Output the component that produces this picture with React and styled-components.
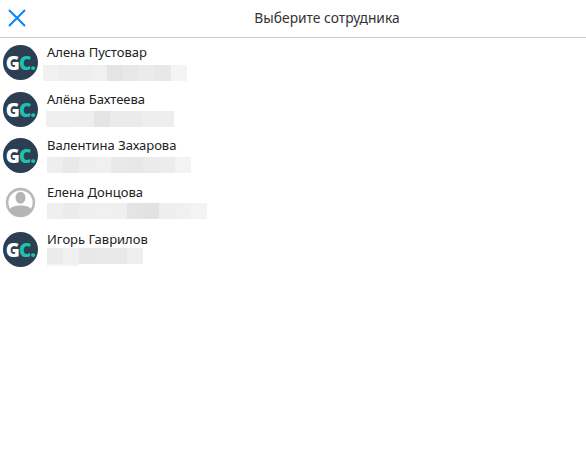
import React from 'react';
import styled, { createGlobalStyle } from 'styled-components';

const GlobalStyle = createGlobalStyle`
  html, body {
    margin: 0;
    padding: 0;
    background: #fff;
  }
  body {
    font-family: "Noto Sans", "Open Sans", sans-serif;
    color: #1f1f1f;
  }
`;

const Page = styled.div`
  width: 586px;
  height: 464px;
  overflow: hidden;
  background: #fff;
`;

const Header = styled.header`
  box-sizing: border-box;
  display: grid;
  grid-template-columns: 68px 1fr;
  align-items: center;
  height: 38px;
  padding-bottom: 2px;
  border-bottom: 1px solid #c9c9c9;
`;

const CloseButton = styled.button`
  display: flex;
  width: 34px;
  height: 34px;
  padding: 8px;
  border: 0;
  background: none;
  color: #0a84ff;
`;

const Title = styled.h1`
  margin: 0;
  font-size: 13.8px;
  font-weight: 400;
  line-height: 18px;
  text-align: center;
  color: #333;
`;

const List = styled.ul`
  display: flex;
  flex-direction: column;
  margin: 0;
  padding: 5px 0 0;
  list-style: none;
`;

const Row = styled.li`
  display: flex;
  gap: 9px;
  height: ${({ $height }) => $height}px;
  padding-left: 3px;
`;

const Avatar = styled.div`
  box-sizing: border-box;
  flex: none;
  display: flex;
  align-items: center;
  justify-content: center;
  width: 35px;
  height: 35px;
  margin-top: 2px;
  padding-top: 1px;
  border-radius: 50%;
  background: #2b3e52;
  font-family: "Open Sans", sans-serif;
  font-size: 19px;
  font-weight: 800;
  letter-spacing: -0.8px;
  color: #fff;
`;

const Accent = styled.span`
  color: #1cc4b0;
`;

const PlaceholderIcon = styled.svg`
  flex: none;
  width: 35px;
  height: 35px;
  margin-top: 2px;
`;

const Info = styled.div`
  display: flex;
  flex-direction: column;
  min-width: 0;
`;

const Name = styled.div`
  font-size: 13px;
  line-height: 18px;
  color: #222;
`;

const Blurred = styled.div`
  display: flex;
  height: 16px;
  margin-top: ${({ $top }) => $top}px;
  margin-left: ${({ $shift }) => $shift}px;
`;

const Tile = styled.span`
  width: 16px;
  height: 16px;
  background: ${({ $shade }) => $shade};
`;

const BlurredStrip = styled.div`
  width: 32px;
  height: 2px;
  background: #f3f3f3;
`;

const GcAvatar = () => (
  <Avatar>
    G<Accent>C.</Accent>
  </Avatar>
);

const PlaceholderAvatar = () => (
  <PlaceholderIcon viewBox="0 0 35 35">
    <circle cx="17.5" cy="17.5" r="13.4" fill="#fff" stroke="#b9b9b9" strokeWidth="2.6" />
    <ellipse cx="17.5" cy="12.8" rx="5" ry="6" fill="#b5b5b5" />
    <path d="M6.4 25 C8 21.6 12.6 20.6 17.5 20.6 C22.4 20.6 27 21.6 28.6 25 C26 29 22 31 17.5 31 C13 31 9 29 6.4 25 Z" fill="#b5b5b5" />
  </PlaceholderIcon>
);

const people = [
  {
    name: 'Алена Пустовар',
    height: 47,
    shift: -4,
    top: 4,
    tiles: ['#f1f1f1', '#eeeeee', '#eeeeee', '#f0f0f0', '#e4e4e4', '#e8e8e8', '#ebebeb', '#e8e8e8', '#f4f4f4'],
  },
  {
    name: 'Алёна Бахтеева',
    height: 46,
    shift: -1,
    top: 3,
    tiles: ['#efefef', '#efefef', '#eeeeee', '#e4e4e4', '#ebebeb', '#ebebeb', '#eeeeee', '#eeeeee'],
  },
  {
    name: 'Валентина Захарова',
    height: 47,
    shift: 0,
    top: 3,
    tiles: ['#eeeeee', '#e9e9e9', '#eeeeee', '#f0f0f0', '#e9e9e9', '#e7e7e7', '#ebebeb', '#ececec', '#f3f3f3'],
  },
  {
    name: 'Елена Донцова',
    height: 47,
    shift: 0,
    top: 2,
    placeholder: true,
    tiles: ['#efefef', '#ebebeb', '#efefef', '#f0f0f0', '#efefef', '#e4e4e4', '#e2e2e2', '#eeeeee', '#f0f0f0', '#f3f3f3'],
  },
  {
    name: 'Игорь Гаврилов',
    height: 47,
    shift: 0,
    top: 0,
    strip: true,
    tiles: ['#ebebeb', '#f0f0f0', '#e8e8e8', '#e9e9e9', '#e9e9e9', '#efefef'],
  },
];

export default function App() {
  return (
    <Page>
      <GlobalStyle />
      <Header>
        <CloseButton aria-label="Закрыть">
          <svg width="18" height="18" viewBox="0 0 18 18" fill="none" stroke="currentColor" strokeWidth="2.1">
            <path d="M1 1 L17 17 M17 1 L1 17" />
          </svg>
        </CloseButton>
        <Title>Выберите сотрудника</Title>
      </Header>
      <List>
        {people.map((person) => (
          <Row key={person.name} $height={person.height}>
            {person.placeholder ? <PlaceholderAvatar /> : <GcAvatar />}
            <Info>
              <Name>{person.name}</Name>
              <Blurred $shift={person.shift} $top={person.top}>
                {person.tiles.map((shade, i) => (
                  <Tile key={i} $shade={shade} />
                ))}
              </Blurred>
              {person.strip && <BlurredStrip />}
            </Info>
          </Row>
        ))}
      </List>
    </Page>
  );
}
